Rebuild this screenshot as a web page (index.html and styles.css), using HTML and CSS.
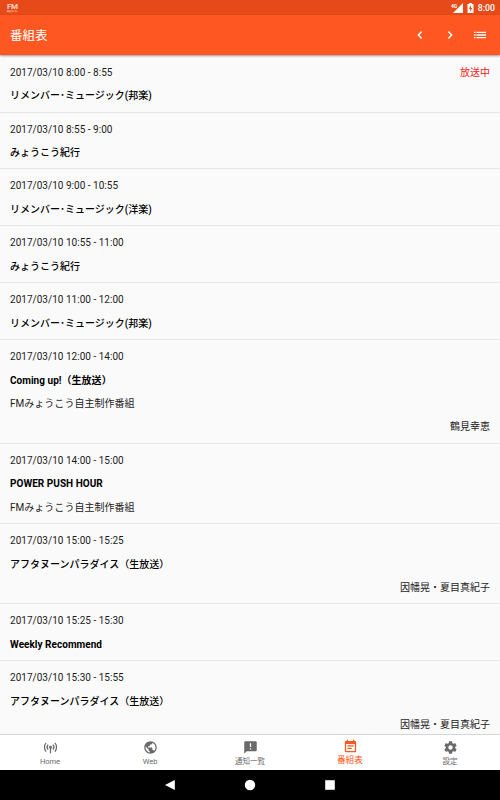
FILE: index.html
```html
<!DOCTYPE html>
<html lang="ja">
<head>
  <meta charset="UTF-8" />
  <meta name="viewport" content="width=device-width, initial-scale=1.0" />
  <title>番組表</title>
  <link rel="stylesheet" href="styles.css">
</head>
<body>
  <div class="screen">

    <div class="status-bar">
      <div class="fm-logo"><span class="fm-name">FM</span><span class="fm-sub">みょうこう</span></div>
      <div class="status-right">
        <svg class="signal" viewBox="0 0 12 10"><path d="M12 0v10H2z" /><text x="0" y="4.5">4G</text></svg>
        <svg class="battery" viewBox="0 0 7 10"><path fill-rule="evenodd" d="M2.2 0h2.6v1H6.5v9h-6V1h1.7zM4 2.3L1.8 5.8h1.3v2.7l2.2-3.6H4z" /></svg>
        <span class="clock">8:00</span>
      </div>
    </div>

    <header class="app-bar">
      <h1>番組表</h1>
      <div class="actions">
        <button class="action" aria-label="前の日"><svg viewBox="0 0 16 16"><path class="chevron" d="M9.6 4.6L6.4 8l3.200 3.400" /></svg></button>
        <button class="action" aria-label="次の日"><svg viewBox="0 0 16 16"><path class="chevron" d="M6.400 4.600L9.600 8l-3.200 3.400" /></svg></button>
        <button class="action" aria-label="一覧"><svg viewBox="0 0 16 16"><path d="M2 4.700h1.600v1.400H2zM2 7.300h1.600v1.400H2zM2 9.900h1.600v1.400H2zM4.500 4.700H14v1.400H4.500zM4.500 7.300H14v1.400H4.500zM4.500 9.900H14v1.400H4.500z" /></svg></button>
      </div>
    </header>

    <main class="program-list">
      <div class="program">
        <div class="line"><span>2017/03/10 8:00 - 8:55</span><span class="on-air">放送中</span></div>
        <div class="title">リメンバー･ミュージック(邦楽)</div>
      </div>
      <div class="program">
        <div class="line">2017/03/10 8:55 - 9:00</div>
        <div class="title">みょうこう紀行</div>
      </div>
      <div class="program">
        <div class="line">2017/03/10 9:00 - 10:55</div>
        <div class="title">リメンバー･ミュージック(洋楽)</div>
      </div>
      <div class="program">
        <div class="line">2017/03/10 10:55 - 11:00</div>
        <div class="title">みょうこう紀行</div>
      </div>
      <div class="program">
        <div class="line">2017/03/10 11:00 - 12:00</div>
        <div class="title">リメンバー･ミュージック(邦楽)</div>
      </div>
      <div class="program">
        <div class="line">2017/03/10 12:00 - 14:00</div>
        <div class="title latin">Coming up!（生放送）</div>
        <div class="line">FMみょうこう自主制作番組</div>
        <div class="person">鶴見幸恵</div>
      </div>
      <div class="program">
        <div class="line">2017/03/10 14:00 - 15:00</div>
        <div class="title latin">POWER PUSH HOUR</div>
        <div class="line">FMみょうこう自主制作番組</div>
      </div>
      <div class="program">
        <div class="line">2017/03/10 15:00 - 15:25</div>
        <div class="title">アフタヌーンパラダイス（生放送）</div>
        <div class="person">因幡晃・夏目真紀子</div>
      </div>
      <div class="program">
        <div class="line">2017/03/10 15:25 - 15:30</div>
        <div class="title latin">Weekly Recommend</div>
      </div>
      <div class="program">
        <div class="line">2017/03/10 15:30 - 15:55</div>
        <div class="title">アフタヌーンパラダイス（生放送）</div>
        <div class="person">因幡晃・夏目真紀子</div>
      </div>
    </main>

    <nav class="tabs">
      <a class="tab">
        <svg viewBox="0 0 24 24"><g class="waves"><path d="M5 4.500a10.500 10.500 0 0 0 0 14M19 4.500a10.500 10.500 0 0 1 0 14M8.200 7.500a6 6 0 0 0 0 8M15.800 7.500a6 6 0 0 1 0 8M12 12v9" /></g><circle cx="12" cy="11.500" r="2.300" /></svg>
        <span>Home</span>
      </a>
      <a class="tab">
        <svg viewBox="0 0 24 24"><path d="M12 2C6.48 2 2 6.48 2 12s4.48 10 10 10 10-4.48 10-10S17.52 2 12 2zm-1 17.93c-3.95-.49-7-3.85-7-7.93 0-.62.08-1.21.21-1.79L9 15v1c0 1.1.9 2 2 2v1.93zm6.9-2.54c-.26-.81-1-1.39-1.9-1.39h-1v-3c0-.55-.45-1-1-1H8v-2h2c.55 0 1-.45 1-1V7h2c1.1 0 2-.9 2-2v-.41c2.93 1.19 5 4.06 5 7.41 0 2.08-.8 3.97-2.1 5.39z" /></svg>
        <span>Web</span>
      </a>
      <a class="tab">
        <svg viewBox="0 0 24 24"><path d="M20 2H4c-1.1 0-1.99.9-1.99 2L2 22l4-4h14c1.1 0 2-.9 2-2V4c0-1.1-.9-2-2-2zm-7 9h-2V5h2v6zm0 4h-2v-2h2v2z" /></svg>
        <span>通知一覧</span>
      </a>
      <a class="tab active">
        <svg viewBox="0 0 24 24"><path d="M17 10H7v2h10v-2zm2-7h-1V1h-2v2H8V1H6v2H5c-1.11 0-1.99.9-1.99 2L3 19c0 1.1.89 2 2 2h14c1.1 0 2-.9 2-2V5c0-1.1-.9-2-2-2zm0 16H5V8h14v11zm-5-5H7v2h7v-2z" /></svg>
        <span>番組表</span>
      </a>
      <a class="tab">
        <svg viewBox="0 0 24 24"><path d="M19.43 12.98c.04-.32.07-.64.07-.98s-.03-.66-.07-.98l2.11-1.65c.19-.15.24-.42.12-.64l-2-3.46c-.12-.22-.39-.3-.61-.22l-2.49 1c-.52-.4-1.08-.73-1.69-.98l-.38-2.65C14.46 2.18 14.25 2 14 2h-4c-.25 0-.46.18-.49.42l-.38 2.65c-.61.25-1.17.59-1.69.98l-2.49-1c-.23-.09-.49 0-.61.22l-2 3.46c-.13.22-.07.49.12.64l2.11 1.65c-.04.32-.07.65-.07.98s.03.66.07.98l-2.11 1.65c-.19.15-.24.42-.12.64l2 3.46c.12.22.39.3.61.22l2.49-1c.52.4 1.08.73 1.69.98l.38 2.65c.03.24.24.42.49.42h4c.25 0 .46-.18.49-.42l.38-2.65c.61-.25 1.17-.59 1.69-.98l2.49 1c.23.09.49 0 .61-.22l2-3.46c.12-.22.07-.49-.12-.64l-2.11-1.65zM12 15.5c-1.93 0-3.5-1.57-3.5-3.5s1.57-3.5 3.5-3.5 3.5 1.57 3.5 3.5-1.57 3.5-3.5 3.5z" /></svg>
        <span>設定</span>
      </a>
    </nav>

    <div class="system-nav">
      <svg viewBox="0 0 12 12"><path d="M10.8 1v10L1 6z" /></svg>
      <svg viewBox="0 0 12 12"><circle cx="6" cy="6" r="5.2" /></svg>
      <svg viewBox="0 0 12 12"><path d="M1.2 1.2h9.6v9.6H1.2z" /></svg>
    </div>

  </div>
</body>
</html>
```

FILE: styles.css
```css
* {
  margin: 0;
  padding: 0;
  box-sizing: border-box;
}

body {
  font-family: Roboto, "Noto Sans CJK JP", sans-serif;
  font-size: 10px;
  color: #1c1c1c;
  background-color: #fafafa;
}

svg { display: block; fill: currentColor; }

.screen {
  display: flex;
  flex-direction: column;
  width: 500px;
  height: 800px;
  overflow: hidden;
}

.status-bar {
  display: flex;
  flex: none;
  justify-content: space-between;
  align-items: center;
  height: 15px;
  padding: 0 5px 0 7px;
  color: #fff;
  background-color: #e64a19;
}

.fm-logo {
  display: flex;
  flex-direction: column;
  width: 11px;
  color: #ffe3da;
}

.fm-name { font-size: 8px; font-weight: 500; line-height: 7px; letter-spacing: -0.4px; }
.fm-sub { font-size: 2px; font-weight: 700; line-height: 3px; white-space: nowrap; }

.status-right { display: flex; align-items: center; }
.signal { width: 12px; height: 10px; margin-right: 4px; }
.signal text { font-size: 5px; font-weight: 700; }
.battery { width: 7px; height: 10px; margin-right: 4px; }
.clock { font-size: 8.75px; font-weight: 500; line-height: 15px; padding-top: 1px; }

.app-bar {
  display: flex;
  flex: none;
  justify-content: space-between;
  align-items: center;
  height: 40px;
  padding: 0 5px 0 10px;
  color: #fff;
  background-color: #ff5722;
  box-shadow: 0 1px 2px rgba(0, 0, 0, 0.4);
  z-index: 1;
}

.app-bar h1 { font-size: 12.5px; font-weight: 400; line-height: 20px; padding-top: 1px; }

.actions { display: flex; }

.action {
  display: flex;
  justify-content: center;
  align-items: center;
  width: 30px;
  height: 40px;
  border: none;
  color: #fff;
  background: none;
}

.action svg { width: 16px; height: 16px; }
.chevron { fill: none; stroke: currentColor; stroke-width: 1.5; }

.program-list { flex: 1; min-height: 0; padding-top: 0.7px; overflow: hidden; }

.program {
  display: flex;
  flex-direction: column;
  gap: 10px;
  padding: 10px 10px 9px;
  line-height: 13.45px;
  border-bottom: 1px solid #e6e6e6;
}

.line { display: flex; justify-content: space-between; height: 13.45px; letter-spacing: 0.02px; }
.title { height: 13.45px; font-weight: 500; color: #000; }
.latin { font-weight: 700; letter-spacing: 0.03px; }
.person { height: 13.45px; text-align: right; }
.on-air { color: #f0221c; }

.tabs {
  display: flex;
  flex: none;
  justify-content: center;
  height: 36px;
  border-top: 1px solid #d5d5d5;
  background-color: #fff;
}

.tab {
  display: flex;
  flex-direction: column;
  align-items: center;
  width: 100px;
  padding-top: 5px;
  font-size: 7.5px;
  line-height: 11px;
  color: #6a6a6a;
}

.tab svg { width: 15px; height: 15px; margin-bottom: 1px; }
.waves { fill: none; stroke: currentColor; stroke-width: 2; }
.tab.active { padding-top: 4px; font-size: 8.75px; color: #ff5722; }

.system-nav {
  display: flex;
  flex: none;
  justify-content: center;
  align-items: center;
  gap: 68px;
  height: 30px;
  color: #fff;
  background-color: #000;
}

.system-nav svg { width: 12px; height: 12px; }
```
